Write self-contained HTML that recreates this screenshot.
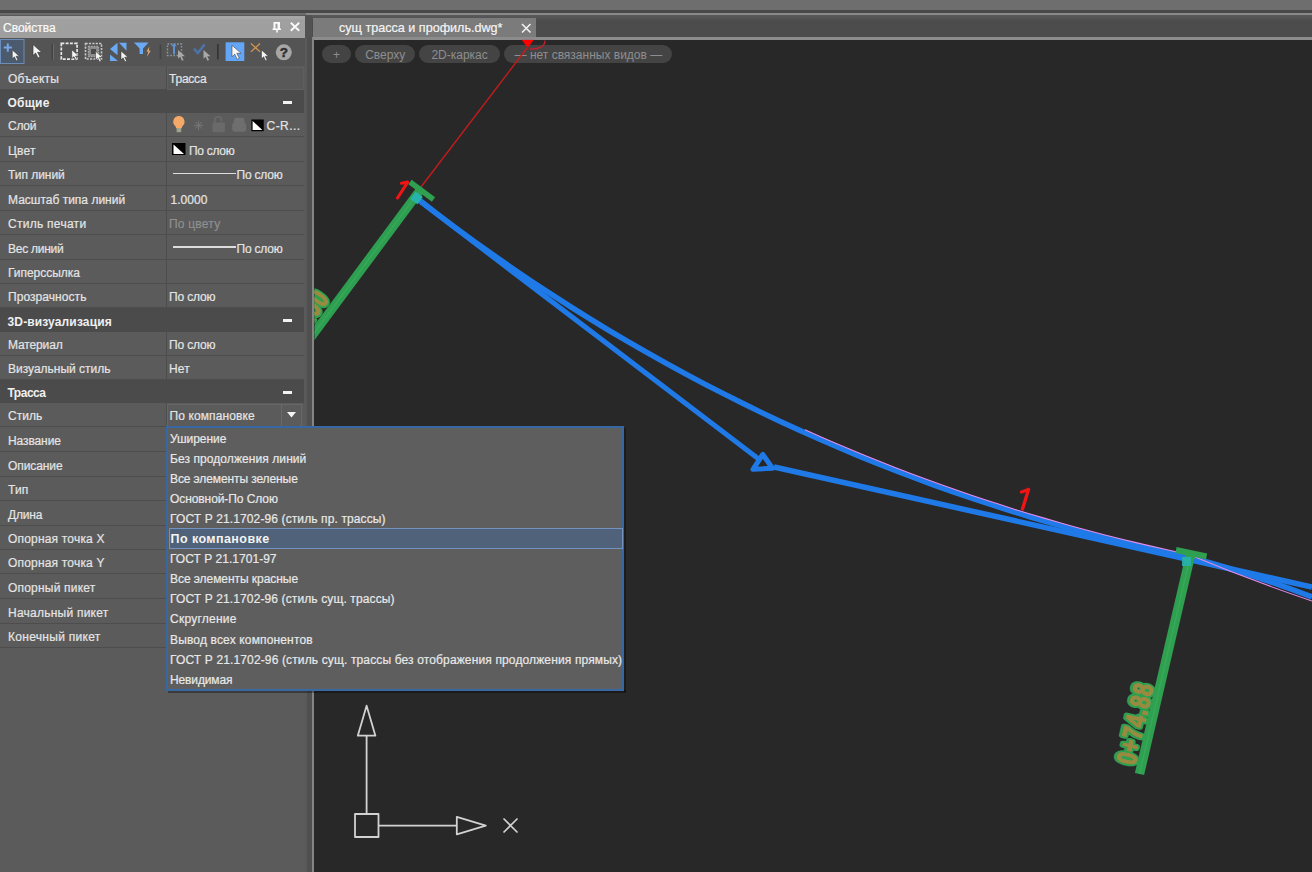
<!DOCTYPE html>
<html><head><meta charset="utf-8">
<style>
*{box-sizing:border-box}
html,body{margin:0;padding:0}
body{width:1312px;height:872px;overflow:hidden;position:relative;background:#282828;font-family:"Liberation Sans",sans-serif;font-size:12px;color:#e6e6e6}
.a{position:absolute}
.t{position:absolute;white-space:nowrap;line-height:14px}
.row{position:absolute;left:0;width:303.7px;background:#5b5b5b;border-bottom:1.5px solid #4d4d4d}
.lab{position:absolute;left:8px;top:50%;margin-top:-6.2px;line-height:16px;white-space:nowrap;color:#e4e4e4;-webkit-text-stroke-width:0.2px}
.val{position:absolute;left:169px;top:50%;margin-top:-6.2px;line-height:16px;white-space:nowrap;color:#e4e4e4;-webkit-text-stroke-width:0.2px}
.colsep{position:absolute;left:165.5px;top:0;bottom:0;width:1.6px;background:#4d4d4d}
.hdr{position:absolute;left:0;width:303.7px;background:#4b4b4b}
.hdr .lab{font-weight:bold;color:#f0f0f0;left:7.5px;-webkit-text-stroke:0}
.minus{position:absolute;left:283px;width:9px;height:3px;background:#f2f2f2}
.dd{position:absolute;left:170px;line-height:16px;white-space:nowrap;color:#e8e8e8;-webkit-text-stroke-width:0.2px}
.pill{position:absolute;top:45px;height:17.5px;border-radius:9px;background:#444;color:#8e8e8e;line-height:20px;text-align:center;font-size:12px}
</style></head><body>
<!-- top bands -->
<div class="a" style="left:0;top:0;width:1312px;height:10px;background:#6e6e6e"></div>
<div class="a" style="left:0;top:10px;width:1312px;height:2.6px;background:#484848"></div>
<div class="a" style="left:0;top:12.6px;width:1312px;height:2.4px;background:#6c6c6c"></div>
<div class="a" style="left:0;top:15px;width:1312px;height:25px;background:#4d4d4d"></div>
<div class="a" style="left:306px;top:12.8px;width:1006px;height:2.4px;background:#898989"></div>

<!-- panel -->
<div class="a" style="left:0;top:15px;width:314px;height:857px;background:#585858"></div>
<div class="a" style="left:0;top:16px;width:305px;height:21.8px;background:linear-gradient(#a6a6a6 0,#a6a6a6 3.5px,#a0a0a0 3.5px,#9f9f9f 100%)"></div>
<div class="t" style="left:3px;top:20.6px;color:#fafafa;-webkit-text-stroke-width:0.2px">Свойства</div>
<svg class="a" style="left:264px;top:16px" width="42" height="22" viewBox="0 0 42 22">
 <path d="M9.5 6h6.5v6.5h1v1.5h-3.2v2.5h-1.6v-2.5h-3.7v-1.5h1z M11.5 7.8v4.7h2v-4.7z" fill="#fafafa" fill-rule="evenodd"/>
 <path d="M26.8 6.8l8.4 7.9M35.2 6.8l-8.4 7.9" stroke="#fafafa" stroke-width="1.9"/>
</svg>
<div class="a" style="left:305px;top:15px;width:8px;height:23px;background:#525252"></div>
<div class="a" style="left:303.7px;top:38px;width:3.3px;height:834px;background:#5a5a5a"></div>
<div class="a" style="left:307px;top:38px;width:5px;height:834px;background:#4f4f4f"></div>

<!-- toolbar -->
<div class="a" style="left:0;top:38px;width:305px;height:28px;background:#545454"></div>
<svg class="a" style="left:0;top:38px" width="305" height="28" viewBox="0 38 305 28">
 <defs>
  <path id="cur" d="M0 0v8.8l2.1-2 1.9 3.9 1.6-0.8-1.9-3.7h3.3z"/>
 </defs>
 <!-- btn1 -->
 <rect x="0.5" y="39.5" width="23.5" height="24" fill="#4b5a6d" stroke="#6c8cba" stroke-width="1"/>
 <path d="M7.8 43.5v8.2M3.7 47.6h8.2" stroke="#79a4e4" stroke-width="2"/>
 <use href="#cur" x="12.3" y="50" fill="#f6f6f6" stroke="#303030" stroke-width="0.5"/>
 <!-- cursor 2 -->
 <use href="#cur" x="0" y="0" fill="#f4f4f4" stroke="#303030" stroke-width="0.5" transform="translate(33 44.6) scale(1.25)"/>
 <!-- sep -->
 <rect x="51.5" y="44" width="1.5" height="15.5" fill="#434343"/><rect x="53" y="44" width="1" height="15.5" fill="#6a6a6a"/>
 <!-- dashed box -->
 <rect x="61.3" y="43.3" width="15.8" height="15.8" fill="none" stroke="#e8e8e8" stroke-width="1.7" stroke-dasharray="3 1.3"/>
 <use href="#cur" x="71.8" y="49.8" fill="#f6f6f6" stroke="#303030" stroke-width="0.5"/>
 <!-- dotted filled box -->
 <rect x="85.5" y="43.5" width="16" height="15.5" fill="none" stroke="#c8c8c8" stroke-width="1.6" stroke-dasharray="2.2 1.2"/>
 <rect x="88.5" y="46.5" width="10" height="10" fill="#8a8a8a" stroke="#a8a8a8" stroke-width="1.4" stroke-dasharray="1.6 1"/><rect x="91" y="49" width="5" height="5" fill="#4a4a4a"/>
 <use href="#cur" x="95.6" y="51.3" fill="#f6f6f6" stroke="#303030" stroke-width="0.5"/>
 <!-- triangles -->
 <path d="M110 49l7.5-6.3v12.6z" fill="#6aaaf4"/>
 <path d="M110 54.5l8 6.5h-8z" fill="#6aaaf4"/>
 <path d="M119 42.8h7.5v8z" fill="#6aaaf4"/>
 <use href="#cur" x="121" y="51" fill="#f4f4f4" stroke="#303030" stroke-width="0.5"/>
 <!-- funnel -->
 <path d="M134 42.5h14.5l-5.5 6v5.5h-3.4v-5.5z" fill="#6aaaf4"/>
 <path d="M149.5 46.5l-3 5h2l-1.8 5.5 4-6.3h-2z" fill="#e8b27a"/>
 <!-- sep -->
 <rect x="159.7" y="44.4" width="1.5" height="15" fill="#444"/>
 <!-- icon 9 -->
 <rect x="167.5" y="44" width="14" height="11.5" fill="none" stroke="#8e9aa8" stroke-width="1.4" stroke-dasharray="1.6 1.6"/>
 <path d="M174 43.2l-3 3h2v8h2v-8h2z" fill="#5f90d0"/>
 <use href="#cur" x="178" y="50" fill="#a9a9a9"/>
 <!-- check -->
 <path d="M194 48.5l3.8 4.6 6.9-8.7" stroke="#4d72aa" stroke-width="2.5" fill="none"/>
 <use href="#cur" x="203.5" y="50" fill="#a9a9a9"/>
 <!-- sep -->
 <rect x="217" y="44.2" width="1.6" height="15.2" fill="#333"/>
 <!-- select btn -->
 <rect x="225.6" y="42.3" width="18.7" height="18.7" fill="#63a5f7"/>
 <use href="#cur" x="0" y="0" fill="#f8f8f8" stroke="#333" stroke-width="0.4" transform="translate(232 45.3) scale(1.3)"/>
 <!-- orange x -->
 <path d="M251 43.5l9 8.3M260 43.5l-9 8.3" stroke="#cf9550" stroke-width="1.3"/>
 <use href="#cur" x="261.5" y="50" fill="#f6f6f6" stroke="#303030" stroke-width="0.5"/>
 <!-- help -->
 <circle cx="283.8" cy="52.3" r="8" fill="#a6a6a6"/>
 <text x="283.8" y="57.3" font-family="Liberation Sans" font-weight="bold" font-size="13.5" fill="#2e2e2e" stroke="#2e2e2e" stroke-width="0.5" text-anchor="middle">?</text>
</svg>

<!-- properties -->
<div class="row" style="top:66px;height:24px"><div class="lab" style="letter-spacing:0.250px;">Объекты</div><div class="colsep"></div><div class="a" style="left:167px;top:0.5px;width:137px;height:23px;border:1px solid #5f5f5f;background:#585858"></div><div class="val" style="left:169px;letter-spacing:-0.220px;">Трасса</div></div>
<div class="hdr" style="top:90px;height:22.5px"><div class="lab" style="letter-spacing:0.250px;">Общие</div><div class="minus" style="top:10.95px"></div></div>
<div class="row" style="top:112.5px;height:24.5px"><div class="lab" style="letter-spacing:-0.250px;">Слой</div><div class="colsep"></div><svg class="a" style="left:165px;top:0" width="140" height="25" viewBox="165 112.5 140 25"><path d="M178.9 115.5a5.6 5.6 0 0 1 3.6 9.9l-0.9 2.3h-5.4l-0.9-2.3a5.6 5.6 0 0 1 3.6-9.9z" fill="#f5a968"/><rect x="176.6" y="127.5" width="4.6" height="4.2" fill="#9fa58c"/><g stroke="#767676" stroke-width="1" fill="none"><path d="M198.6 120v9.6M194 124.8h9.2M195.4 121.6l6.4 6.4M201.8 121.6l-6.4 6.4"/></g><rect x="212.5" y="122" width="12.3" height="9.7" fill="#6a6a6a"/><path d="M214.8 122v-2.5a3.3 3.3 0 0 1 6.6 0v1" stroke="#6a6a6a" stroke-width="1.6" fill="none"/><rect x="233.8" y="117.3" width="10.7" height="6" rx="2.5" fill="#6e6e6e"/><rect x="232.2" y="122" width="13.9" height="9.2" rx="2.5" fill="#6e6e6e"/><rect x="251.4" y="119" width="12.3" height="11.7" fill="#000"/><path d="M252.6 120.4L262.4 129.6H252.6z" fill="#fff"/></svg><div class="val" style="left:266.5px;letter-spacing:0.460px;">C-R...</div></div>
<div class="row" style="top:137px;height:24.5px"><div class="lab" style="letter-spacing:0.167px;">Цвет</div><div class="colsep"></div><svg class="a" style="left:172px;top:6px" width="14" height="13" viewBox="0 0 14 13"><rect x="0" y="0" width="13.5" height="12" fill="#000"/><path d="M1.5 1.5L12 11H1.5z" fill="#fff"/></svg><div class="val" style="left:189px;letter-spacing:-0.300px;">По слою</div></div>
<div class="row" style="top:161.5px;height:24.5px"><div class="lab" style="letter-spacing:-0.037px;">Тип линий</div><div class="colsep"></div><div class="a" style="left:172.5px;top:50%;margin-top:-0.5px;width:63px;height:1.3px;background:#dcdcdc"></div><div class="val" style="left:236.5px;letter-spacing:-0.200px;">По слою</div></div>
<div class="row" style="top:186px;height:24.5px"><div class="lab" style="">Масштаб типа линий</div><div class="colsep"></div><div class="val" style="left:170.5px;letter-spacing:0.040px;">1.0000</div></div>
<div class="row" style="top:210.5px;height:24.5px"><div class="lab" style="letter-spacing:0.273px;">Стиль печати</div><div class="colsep"></div><div class="val" style="color:#8f8f8f;letter-spacing:0.214px;">По цвету</div></div>
<div class="row" style="top:235px;height:24.5px"><div class="lab" style="letter-spacing:-0.250px;">Вес линий</div><div class="colsep"></div><div class="a" style="left:172.5px;top:50%;margin-top:-0.5px;width:63px;height:1.3px;background:#dcdcdc"></div><div class="val" style="left:236.5px;letter-spacing:-0.200px;">По слою</div></div>
<div class="row" style="top:259.5px;height:24.5px"><div class="lab" style="letter-spacing:-0.030px;">Гиперссылка</div><div class="colsep"></div></div>
<div class="row" style="top:284px;height:24px"><div class="lab" style="letter-spacing:0.064px;">Прозрачность</div><div class="colsep"></div><div class="val" style="letter-spacing:-0.150px;">По слою</div></div>
<div class="hdr" style="top:308px;height:23.5px"><div class="lab" style="letter-spacing:0.143px;">3D-визуализация</div><div class="minus" style="top:11.45px"></div></div>
<div class="row" style="top:331.5px;height:24.0px"><div class="lab" style="letter-spacing:-0.129px;">Материал</div><div class="colsep"></div><div class="val" style="letter-spacing:-0.150px;">По слою</div></div>
<div class="row" style="top:355.5px;height:24.0px"><div class="lab" style="letter-spacing:-0.013px;">Визуальный стиль</div><div class="colsep"></div><div class="val" style="letter-spacing:0.200px;">Нет</div></div>
<div class="hdr" style="top:379.5px;height:23.0px"><div class="lab" style="letter-spacing:-0.500px;">Трасса</div><div class="minus" style="top:11.2px"></div></div>
<div class="row" style="top:402.5px;height:24.5px"><div class="lab" style="letter-spacing:0.050px;">Стиль</div><div class="colsep"></div><div class="a" style="left:167px;top:1px;width:135px;height:23px;border:1px solid #676767;background:#5b5b5b"></div><div class="a" style="left:280.5px;top:1px;width:1px;height:23px;background:#6a6a6a"></div><svg class="a" style="left:286.5px;top:9.5px" width="10" height="6" viewBox="0 0 10 6"><path d="M0 0h9L4.5 5.5z" fill="#f4f4f4"/></svg><div class="val" style="left:169.5px;letter-spacing:0.108px;">По компановке</div></div>
<div class="row" style="top:427px;height:25px"><div class="lab" style="letter-spacing:-0.100px;">Название</div><div class="colsep"></div></div>
<div class="row" style="top:452px;height:24.5px"><div class="lab" style="letter-spacing:-0.086px;">Описание</div><div class="colsep"></div></div>
<div class="row" style="top:476.5px;height:24.5px"><div class="lab" style="letter-spacing:0.150px;">Тип</div><div class="colsep"></div></div>
<div class="row" style="top:501px;height:24.5px"><div class="lab" style="letter-spacing:-0.175px;">Длина</div><div class="colsep"></div></div>
<div class="row" style="top:525.5px;height:24.5px"><div class="lab" style="letter-spacing:0.186px;">Опорная точка X</div><div class="colsep"></div></div>
<div class="row" style="top:550px;height:24px"><div class="lab" style="letter-spacing:0.186px;">Опорная точка Y</div><div class="colsep"></div></div>
<div class="row" style="top:574px;height:25px"><div class="lab" style="letter-spacing:0.200px;">Опорный пикет</div><div class="colsep"></div></div>
<div class="row" style="top:599px;height:24.5px"><div class="lab" style="letter-spacing:0.236px;">Начальный пикет</div><div class="colsep"></div></div>
<div class="row" style="top:623.5px;height:24.5px"><div class="lab" style="letter-spacing:0.300px;">Конечный пикет</div><div class="colsep"></div></div>
<div class="a" style="left:0;top:648px;width:303.7px;height:224px;background:#5b5b5b"></div>

<!-- tab bar -->
<div class="a" style="left:312px;top:15px;width:1000px;height:23px;background:linear-gradient(#5a5a5a,#4b4b4b 6px,#4c4c4c)"></div>
<div class="a" style="left:313px;top:18px;width:223px;height:19px;background:#7b7b7b"></div>
<div class="t" style="left:339px;top:21.3px;color:#f4f4f4;font-size:12.6px;-webkit-text-stroke-width:0.2px">сущ трасса и профиль.dwg*</div>
<svg class="a" style="left:520px;top:22px" width="13" height="13" viewBox="0 0 13 13"><path d="M2 2l8.5 8.5M10.5 2L2 10.5" stroke="#f0f0f0" stroke-width="1.6"/></svg>
<div class="a" style="left:312px;top:37.3px;width:1000px;height:2.4px;background:#8c8c8c"></div>
<div class="a" style="left:312px;top:38px;width:2.4px;height:834px;background:#858585"></div>

<!-- viewport -->
<div class="a" style="left:314.5px;top:39.7px;width:998px;height:833px;background:#282828"></div>
<div class="pill" style="left:322.4px;width:28.2px">+</div>
<div class="pill" style="left:355px;width:60.4px">Сверху</div>
<div class="pill" style="left:419.2px;width:80.8px">2D-каркас</div>
<div class="pill" style="left:504.4px;width:168px">— нет связанных видов —</div>

<svg class="a" style="left:0;top:0" width="1312" height="872" viewBox="0 0 1312 872">
 <defs><clipPath id="vp"><rect x="314.5" y="39.7" width="998" height="833"/></clipPath></defs>
 <g clip-path="url(#vp)">
  <!-- red line -->
  <path d="M527 48L421 187" stroke="#c41c1c" stroke-width="1.4"/>
  <path d="M521.5 39.5h12.5l-6.2 8.5z" fill="#ff0000"/>
  <path d="M545 40.5c0 6-6 9-15 8.5" stroke="#c02030" stroke-width="1.4" fill="none"/>
  <!-- green station 1 -->
  <path d="M306 344L421 189" stroke="#2f9f50" stroke-width="9"/>
  <path d="M306 344L421 189" stroke="#3db060" stroke-width="1.5" opacity="0.6"/>
  <path d="M410 182L433.5 199.5" stroke="#2f9f50" stroke-width="5.5"/>
  <g transform="translate(329.5 298.5) rotate(-54) scale(0.98 1.3)" font-family="Liberation Sans" font-weight="bold" font-size="21" letter-spacing="0.6" text-anchor="end"><text x="0" y="0" fill="#2f9f50" stroke="#2f9f50" stroke-width="5" stroke-linejoin="round">0+00.00</text><text x="0" y="0" fill="#9a8a40" stroke="#9a8a40" stroke-width="1">0+00.00</text></g>
  <!-- tangent line and triangle -->
  <path d="M417 199L758 458.5" stroke="#1f7ae8" stroke-width="5" stroke-linecap="round"/>
  <path d="M762.8 454.5L753 469.3L772.5 468.3z" stroke="#1f7ae8" stroke-width="5" fill="none" stroke-linejoin="round"/>
  <path d="M774 467L1312 587" stroke="#1f7ae8" stroke-width="5.5"/>
  <!-- curve -->
  <path d="M417.0 198.3 436.2 213.1 455.4 227.6 474.5 241.6 493.7 255.3 512.9 268.7 532.1 281.7 551.3 294.3 570.4 306.6 589.6 318.6 608.8 330.3 628.0 341.6 647.2 352.7 666.3 363.4 685.5 373.9 704.7 384.1 723.9 393.9 743.1 403.5 762.2 412.9 781.4 421.9 800.6 430.7 819.8 439.3 838.9 447.6 858.1 455.6 877.3 463.4 896.5 470.9 915.7 478.2 934.8 485.3 954.0 492.1 973.2 498.7 992.4 505.0 1011.6 511.1 1030.7 517.0 1049.9 522.7 1069.1 528.1 1088.3 533.4 1107.5 538.4 1126.6 543.2 1145.8 547.7 1165.0 552.1 L1190 557.5Q1250 573 1312 597" stroke="#1f7ae8" stroke-width="5.5" fill="none"/>
  <path d="M805.0 429.8 820.0 436.4 835.0 442.9 850.0 449.3 865.0 455.5 880.0 461.5 895.0 467.4 910.0 473.2 925.0 478.8 940.0 484.2 955.0 489.6 970.0 494.7 985.0 499.7 1000.0 504.6 1015.0 509.4 1030.0 514.0 1045.0 518.4 1060.0 522.8 1075.0 527.0 1090.0 531.0 1105.0 535.0 1120.0 538.8 1135.0 542.4 1150.0 545.9 1165.0 549.3 L1190 555Q1250 580 1312 601" stroke="#e58ae8" stroke-width="1.1" fill="none"/>
  <!-- junction cyan -->
  <rect x="412" y="193.5" width="9" height="9" fill="#27b3ad" transform="rotate(36 416.5 198)"/>
  <!-- red 1s -->
  <path d="M397.5 198L407.5 182.5M401.5 183.2L407.5 182" stroke="#f01414" stroke-width="3.2" stroke-linecap="round"/>
  <path d="M1022.5 509L1028.5 489.5M1021.5 492L1028.5 489.5" stroke="#f01414" stroke-width="3.4" stroke-linecap="round"/>
  <!-- green station 2 -->
  <path d="M1139.5 774L1190.5 555" stroke="#2f9f50" stroke-width="9.5"/>
  <path d="M1139.5 774L1190.5 555" stroke="#3db060" stroke-width="1.5" opacity="0.6"/>
  <path d="M1176 550L1206.6 556.5" stroke="#2f9f50" stroke-width="6"/>
  <rect x="1182" y="557" width="9" height="9" fill="#27b3ad" opacity="0.9"/>
  <g transform="translate(1134.5 766) rotate(-76.9) scale(0.98 1.3)" font-family="Liberation Sans" font-weight="bold" font-size="21" letter-spacing="1.2"><text x="0" y="0" fill="#2f9f50" stroke="#2f9f50" stroke-width="5" stroke-linejoin="round">0+74.88</text><text x="0" y="0" fill="#9a8a40" stroke="#9a8a40" stroke-width="1">0+74.88</text></g>
  <!-- UCS -->
  <g stroke="#d2d2d2" stroke-width="1.8" fill="none" stroke-linejoin="round">
   <rect x="355" y="814" width="23.5" height="23"/>
   <path d="M366.6 813.5V735.7M357.8 735.7h17.6l-8.8-30z"/>
   <path d="M378.5 825.6H456.8M456.8 816.8v17.5l29-8.75z"/>
   <path d="M503.5 818.5l14 14M517.5 818.5l-14 14" stroke-width="1.6"/>
  </g>
 </g>
</svg>

<!-- dropdown -->
<div class="a" style="left:168px;top:690px;width:458px;height:2.5px;background:rgba(0,0,0,0.35)"></div><div class="a" style="left:624px;top:428px;width:2px;height:264px;background:rgba(0,0,0,0.3)"></div>
<div class="a" style="left:166px;top:426px;width:458px;height:264.5px;background:#5e5e5e;border:2px solid #3768a3"></div>
<div class="dd" style="top:430.7px;letter-spacing:-0.057px;">Уширение</div>
<div class="dd" style="top:450.78px;letter-spacing:0.080px;">Без продолжения линий</div>
<div class="dd" style="top:470.85999999999996px;letter-spacing:-0.105px;">Все элементы зеленые</div>
<div class="dd" style="top:490.94px;letter-spacing:-0.080px;">Основной-По Слою</div>
<div class="dd" style="top:511.02px;letter-spacing:0.114px;">ГОСТ Р 21.1702-96 (стиль пр. трассы)</div>
<div class="a" style="left:168.5px;top:528.1px;width:454px;height:21.3px;background:#4f6279;border:1px solid #7192c2"></div>
<div class="dd" style="top:531.1px;font-weight:bold;color:#f4f4f4;left:170.5px;font-size:12.5px;letter-spacing:0.43px;-webkit-text-stroke:0">По компановке</div>
<div class="dd" style="top:551.1800000000001px;letter-spacing:0.025px;">ГОСТ Р 21.1701-97</div>
<div class="dd" style="top:571.26px;letter-spacing:-0.053px;">Все элементы красные</div>
<div class="dd" style="top:591.34px;letter-spacing:0.117px;">ГОСТ Р 21.1702-96 (стиль сущ. трассы)</div>
<div class="dd" style="top:611.4200000000001px;letter-spacing:0.233px;">Скругление</div>
<div class="dd" style="top:631.5px;letter-spacing:0.152px;">Вывод всех компонентов</div>
<div class="dd" style="top:651.58px;letter-spacing:0.137px;">ГОСТ Р 21.1702-96 (стиль сущ. трассы без отображения продолжения прямых)</div>
<div class="dd" style="top:671.6600000000001px;letter-spacing:-0.125px;">Невидимая</div>
</body></html>
